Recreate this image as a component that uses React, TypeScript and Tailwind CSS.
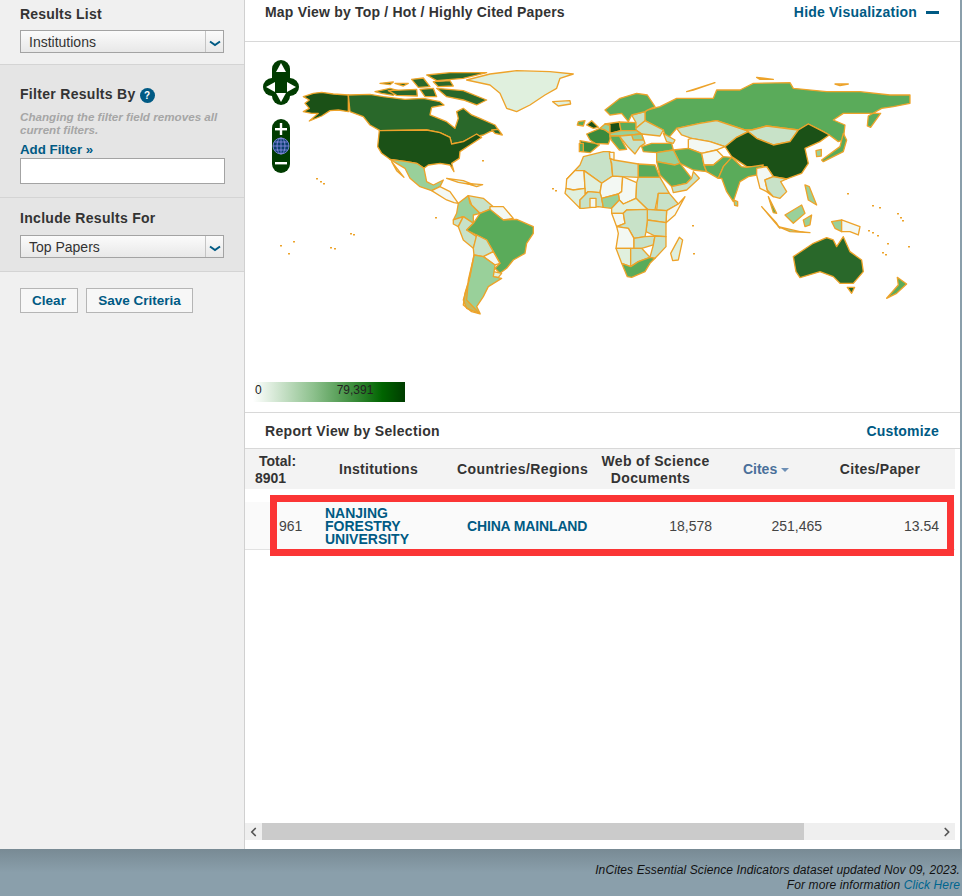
import { ChevronLeft, ChevronRight } from 'lucide-react';

const dark = '#1b5117';
const deep = '#29682a';
const strong = '#3c8a3c';
const mid = '#5aab5a';
const soft = '#99d09a';
const pale = '#c8e2c8';
const faint = '#e0f0de';
const blank = '#f3f8f3';

// shapes below are read off 3x crops, so each group is scaled back down
const americas: [string, string][] = [
  [dark, 'M295,135 L250,132 L215,127 L190,130 L160,140 L178,150 L165,160 L178,175 L160,185 L185,190 L205,190 L178,213 L215,198 L240,182 L265,180 L295,185 Z'],
  [deep, 'M295,135 L360,133 L400,140 L465,148 L520,145 L570,155 L582,165 L545,172 L540,195 L590,215 L615,235 L625,205 L620,185 L640,175 L665,195 L690,205 L735,225 L745,240 L720,245 L700,255 L665,262 L640,275 L605,282 L600,262 L570,248 L530,240 L390,242 L360,225 L340,200 L300,185 Z'],
  [deep, 'M725,240 L745,238 L757,255 L735,250 Z'],
  [dark, 'M388,242 L530,240 L570,248 L600,262 L605,282 L640,275 L680,252 L695,262 L660,285 L630,305 L628,325 L605,340 L612,365 L600,345 L570,340 L535,345 L522,355 L500,340 L470,335 L420,328 L395,310 L383,290 Z'],
  [deep, 'M375,125 L420,115 L445,122 L430,136 L395,130 Z'],
  [deep, 'M415,122 L500,118 L502,138 L440,136 Z'],
  [deep, 'M390,100 L430,96 L420,104 Z'],
  [deep, 'M435,100 L475,100 L460,108 Z'],
  [deep, 'M485,88 L520,84 L540,110 L505,112 Z'],
  [deep, 'M510,118 L550,115 L560,140 L525,140 Z'],
  [deep, 'M560,115 L640,122 L710,150 L680,165 L640,150 L590,140 Z'],
  [deep, 'M530,75 L600,68 L710,68 L640,85 L560,92 Z'],
  [deep, 'M550,95 L600,92 L610,108 L565,110 Z'],
  [faint, 'M650,90 L720,72 L800,62 L900,65 L970,72 L930,85 L920,115 L885,135 L840,165 L800,185 L770,175 L750,130 L720,105 Z'],
  [faint, 'M908,155 L960,152 L962,162 L925,168 Z'],
  [soft, 'M420,328 L470,335 L500,340 L522,355 L530,395 L550,405 L580,390 L570,410 L545,422 L510,410 L480,385 L465,355 Z'],
  [pale, 'M425,335 L462,382 L440,362 Z'],
  [blank, 'M545,422 L570,410 L600,425 L625,460 L612,458 L590,450 Z'],
  [faint, 'M590,385 L640,392 L672,405 L625,397 Z'],
  [faint, 'M650,400 L698,404 L680,410 Z'],
  [soft, 'M655,437 L625,460 L620,490 L610,510 L640,500 L670,520 L670,495 L690,490 L660,460 Z'],
  [pale, 'M655,437 L700,445 L730,470 L715,480 L690,490 L665,465 Z'],
  [blank, 'M720,470 L760,470 L790,505 L760,510 L720,480 Z'],
  [pale, 'M610,510 L640,500 L625,530 L610,522 Z'],
  [pale, 'M625,530 L640,500 L670,520 L650,540 L680,560 L670,595 L640,570 Z'],
  [mid, 'M690,490 L720,478 L760,510 L800,508 L850,530 L850,550 L830,580 L825,610 L790,630 L770,655 L750,670 L735,655 L750,640 L730,605 L710,570 L680,555 L650,540 L670,520 Z'],
  [pale, 'M680,555 L710,570 L730,605 L700,620 L672,615 L670,595 Z'],
  [blank, 'M700,620 L730,605 L750,640 L735,645 Z'],
  [faint, 'M730,665 L755,670 L745,682 L730,680 Z'],
  [soft, 'M672,615 L700,620 L735,645 L730,680 L755,685 L715,710 L700,740 L680,770 L690,790 L650,775 L640,750 L655,700 Z'],
];

const eastern: [string, string][] = [
  [mid, 'M262,180 L300,170 L350,145 L460,145 L470,120 L540,120 L580,100 L690,98 L700,115 L800,125 L900,125 L990,135 L1050,135 L1050,160 L1000,170 L965,175 L925,198 L922,228 L932,232 L962,190 L900,190 L850,190 L820,210 L855,225 L850,270 L835,275 L808,255 L790,245 L745,222 L715,240 L620,228 L575,240 L555,240 L470,212 L420,220 L350,235 L320,270 L310,240 L255,212 L255,185 Z'],
  [pale, 'M350,235 L420,220 L470,212 L555,240 L565,245 L530,262 L495,290 L450,275 L395,265 L365,255 Z'],
  [pale, 'M555,240 L575,240 L620,228 L715,240 L690,275 L640,285 L590,265 L565,245 Z'],
  [dark, 'M495,290 L530,262 L565,245 L590,265 L640,285 L690,275 L715,240 L745,222 L790,245 L808,255 L780,275 L735,295 L745,340 L725,370 L680,387 L640,380 L620,350 L560,350 L515,320 Z'],
  [blank, 'M385,268 L395,265 L450,275 L495,290 L470,300 L425,310 L385,295 Z'],
  [mid, 'M340,300 L385,295 L425,310 L432,345 L440,365 L400,360 L360,340 Z'],
  [blank, 'M425,310 L470,300 L490,320 L460,345 L432,345 Z'],
  [mid, 'M432,345 L460,345 L490,320 L515,322 L490,350 L475,385 L440,365 Z'],
  [mid, 'M490,350 L515,322 L545,350 L560,352 L610,345 L590,375 L565,380 L540,395 L520,455 L500,425 L485,385 L475,385 Z'],
  [soft, 'M522,450 L533,455 L533,468 L524,466 Z'],
  [blank, 'M590,355 L620,350 L640,380 L615,390 L622,420 L640,440 L620,425 L600,415 L590,375 Z'],
  [pale, 'M615,390 L640,380 L680,387 L662,395 L680,425 L660,445 L640,440 L622,420 Z'],
  [mid, 'M785,330 L840,290 L850,250 L860,270 L850,305 L790,335 Z'],
  [soft, 'M768,302 L784,298 L784,318 L770,320 Z'],
  [soft, 'M675,495 L725,465 L735,490 L700,520 Z'],
  [mid, 'M605,470 L650,520 L660,535 L630,500 Z'],
  [mid, 'M625,440 L650,490 L640,488 Z'],
  [soft, 'M655,530 L720,545 L750,548 L690,545 Z'],
  [soft, 'M730,510 L755,495 L750,525 L735,530 Z'],
  [soft, 'M815,515 L845,510 L845,545 L825,535 Z'],
  [blank, 'M845,510 L900,530 L895,555 L870,545 L845,545 Z'],
  [soft, 'M735,405 L748,410 L770,465 L745,450 Z'],
  [deep, 'M700,620 L760,580 L800,563 L820,570 L830,590 L850,560 L870,605 L905,630 L910,665 L880,700 L840,700 L820,680 L780,665 L720,683 L708,665 Z'],
  [deep, 'M862,712 L884,712 L875,730 Z'],
  [mid, 'M1012,682 L1040,702 L1010,730 L980,745 L1015,705 Z'],
  // Africa
  [pale, 'M20,388 L60,345 L70,320 L130,305 L150,305 L158,378 L125,400 L72,362 L45,362 Z'],
  [blank, 'M20,388 L45,362 L72,362 L75,415 L40,420 L18,415 Z'],
  [faint, 'M72,362 L125,400 L120,428 L85,425 L75,432 L75,415 Z'],
  [blank, 'M125,400 L158,378 L188,380 L185,425 L175,432 L125,445 L120,428 Z'],
  [pale, 'M150,325 L162,330 L235,342 L235,382 L188,380 L158,378 L155,340 Z'],
  [blank, 'M148,307 L162,307 L162,330 L150,325 Z'],
  [mid, 'M235,342 L285,345 L300,382 L235,382 Z'],
  [blank, 'M188,380 L230,398 L228,445 L190,462 L178,450 L175,432 L185,425 Z'],
  [pale, 'M235,382 L300,382 L328,430 L295,430 L285,480 L262,478 L228,445 L230,398 Z'],
  [pale, 'M295,430 L328,430 L355,462 L320,482 L290,480 Z'],
  [blank, 'M355,462 L375,440 L345,495 L318,518 L320,482 Z'],
  [pale, 'M262,478 L290,480 L320,482 L318,518 L262,510 Z'],
  [pale, 'M262,510 L318,518 L318,560 L285,558 L258,545 Z'],
  [faint, 'M18,415 L40,420 L75,415 L75,432 L85,425 L60,450 L60,475 L40,455 L15,430 Z'],
  [pale, 'M60,450 L85,425 L120,428 L125,445 L130,472 L115,470 L70,475 L60,475 Z'],
  [blank, 'M90,445 L108,445 L108,472 L90,472 Z'],
  [soft, 'M125,445 L175,432 L178,450 L155,475 L130,472 Z'],
  [faint, 'M155,475 L178,450 L190,462 L228,445 L262,478 L200,480 L190,490 L155,490 Z'],
  [blank, 'M155,490 L190,490 L195,520 L170,530 Z'],
  [pale, 'M190,490 L200,480 L262,478 L262,510 L258,545 L255,560 L222,565 L205,535 L170,530 L195,520 Z'],
  [blank, 'M170,530 L205,535 L222,565 L222,595 L168,595 L175,550 Z'],
  [pale, 'M222,565 L255,560 L285,558 L280,585 L245,595 L222,595 Z'],
  [pale, 'M285,558 L318,560 L318,590 L285,625 L270,622 L280,585 Z'],
  [faint, 'M168,595 L212,595 L212,650 L185,640 Z'],
  [pale, 'M212,595 L245,595 L270,622 L235,635 L212,650 Z'],
  [mid, 'M185,640 L212,650 L235,635 L270,622 L285,625 L270,640 L255,665 L215,682 L202,680 Z'],
  [faint, 'M358,562 L368,570 L355,630 L338,632 L332,610 Z'],
  // Europe and the Middle East
  [mid, 'M55,215 L75,212 L70,228 L52,225 Z'],
  [dark, 'M80,225 L95,212 L115,232 L100,235 Z'],
  [strong, 'M80,252 L120,235 L135,240 L150,250 L150,268 L145,282 L105,280 L90,270 Z'],
  [strong, 'M60,272 L105,280 L118,285 L90,308 L65,305 Z'],
  [mid, 'M58,280 L70,280 L70,305 L58,305 Z'],
  [soft, 'M120,235 L135,222 L150,225 L150,250 L135,240 Z'],
  [dark, 'M135,222 L178,216 L183,242 L150,250 L150,225 Z'],
  [mid, 'M178,216 L228,218 L230,242 L183,242 Z'],
  [pale, 'M228,218 L215,195 L255,185 L255,212 L228,235 Z'],
  [pale, 'M230,242 L228,235 L255,212 L310,240 L300,258 L245,252 Z'],
  [soft, 'M150,250 L183,242 L230,242 L245,252 L215,255 L178,258 L150,258 Z'],
  [pale, 'M178,258 L215,255 L245,252 L255,280 L240,290 L225,312 L205,292 Z'],
  [soft, 'M215,255 L245,252 L250,270 L220,270 Z'],
  [mid, 'M150,258 L178,258 L200,298 L178,300 L155,272 Z'],
  [mid, 'M135,180 L180,145 L230,130 L262,135 L285,170 L262,180 L255,185 L215,195 L205,215 L185,190 L150,195 Z'],
  [pale, 'M310,250 L345,270 L340,280 L320,275 Z'],
  [mid, 'M245,290 L275,280 L335,280 L340,300 L290,308 L250,305 Z'],
  [soft, 'M290,308 L340,300 L360,340 L345,345 L290,335 Z'],
  [mid, 'M290,335 L345,345 L360,340 L395,385 L380,400 L335,410 L300,375 Z'],
  [pale, 'M335,410 L380,400 L395,385 L400,365 L418,385 L380,420 L340,428 Z'],
];

// tiny islands, just orange specks
const specks: [number, number][] = [
  [316, 178], [320, 181], [323, 183], [350, 233], [353, 234], [293, 241], [280, 245], [288, 253], [330, 247], [334, 248], [435, 217], [552, 188], [555, 190], [482, 160],
  [692, 225], [897, 213], [900, 217], [902, 220], [868, 230], [872, 232], [877, 235], [882, 252], [885, 254], [908, 246], [887, 243], [847, 193], [872, 205], [879, 207], [693, 253],
];

function WorldMap() {
  return (
    <svg viewBox="245 42 715 370" width="715" height="370" className="block">
      <g transform="translate(250,50) scale(0.3333)" stroke="#eda32a" strokeWidth="4" strokeLinejoin="round">
        {americas.map(([fill, d], i) => (
          <path key={i} d={d} fill={fill} />
        ))}
        <path d="M672,618 L660,680 L645,730 L640,765 L665,785 L690,792 L650,750 L655,690 Z" fill="#eda32a" fillOpacity="0.5" />
      </g>
      <g transform="translate(560,50) scale(0.3333)" stroke="#eda32a" strokeWidth="4" strokeLinejoin="round">
        {eastern.map(([fill, d], i) => (
          <path key={i} d={d} fill={fill} />
        ))}
        <path d="M380,125 L465,98 L400,120 Z" fill="#ffffff" />
        <path d="M590,82 L640,88 L600,88 Z" fill="#ffffff" />
        <path d="M825,102 L865,102 L840,107 Z" fill="#ffffff" />
      </g>
      {specks.map(([x, y], i) => (
        <rect key={i} x={x} y={y} width="2" height="1.5" fill="#eda32a" />
      ))}

      {/* pan and zoom controls */}
      <g fill="#003c00">
        <rect x="272" y="60" width="18" height="45" rx="9" />
        <rect x="263" y="78" width="36" height="18" rx="9" />
        <rect x="272" y="119" width="18" height="54" rx="9" />
      </g>
      <g fill="#ffffff">
        <path d="M281,63 L286,72 L276,72 Z" />
        <path d="M281,102 L286,93 L276,93 Z" />
        <path d="M266,87 L275,82 L275,92 Z" />
        <path d="M296,87 L287,82 L287,92 Z" />
        <rect x="275" y="128" width="12" height="2.4" />
        <rect x="279.8" y="123" width="2.4" height="12" />
        <rect x="275" y="162" width="12" height="2.4" />
      </g>
      <g fill="#0b3f6e" stroke="#8f8fe8" strokeWidth="0.8">
        <circle cx="281" cy="146" r="8" />
        <ellipse cx="281" cy="146" rx="4" ry="8" fill="none" />
        <path d="M281,138 V154 M273,146 H289 M274.5,142 H287.5 M274.5,150 H287.5" fill="none" />
      </g>
    </svg>
  );
}

function SelectBox({ label }: { label: string }) {
  return (
    <div className="flex h-[23px] w-[204px] border border-[#a3a3a3] bg-gradient-to-b from-[#fbfbfb] to-[#e8e8e8]">
      <div className="flex-1 pl-2 text-[14px] leading-[23px] text-[#333]">{label}</div>
      <div className="flex w-[18px] items-center justify-center border-l border-[#c4c4c4]">
        <svg width="12" height="7" viewBox="0 0 12 7" className="mt-[4px]">
          <path d="M1,1.5 L6,5 L11,1.5" fill="none" stroke="#005a84" strokeWidth="2" />
        </svg>
      </div>
    </div>
  );
}

export default function App() {
  return (
    <div className="relative flex h-[896px] w-[962px] flex-col overflow-hidden bg-[#8a9fab] font-['Liberation_Sans',Arial,sans-serif]">
      <div className="flex h-[849px] shrink-0">
        {/* left filter rail */}
        <aside className="w-[245px] shrink-0 border-r border-[#d0d0d0] bg-[#f0f0f0]">
          <div className="h-[65px] border-b border-[#d4d4d4] px-5 pt-[6px]">
            <h3 className="text-[14px] leading-[16px] font-bold tracking-[0.2px] text-[#333]">Results List</h3>
            <div className="mt-[8px]">
              <SelectBox label="Institutions" />
            </div>
          </div>
          <div className="h-[133px] border-b border-[#d4d4d4] bg-[#e5e5e5] px-5 pt-[21px]">
            <div className="flex items-start gap-[4px]">
              <h3 className="text-[14px] leading-[16px] font-bold tracking-[0.3px] text-[#333]">Filter Results By</h3>
              <span className="mt-[2px] flex h-[15px] w-[15px] items-center justify-center rounded-full bg-[#005a84] text-[10px] font-bold text-white">?</span>
            </div>
            <p className="mt-[7px] text-[11.65px] leading-[13px] font-bold text-[#a6a6a6] italic">Changing the filter field removes all current filters.</p>
            <div className="mt-[6px] text-[13.3px] leading-[16px] font-bold text-[#005a84]">Add Filter »</div>
            <input className="block h-[26px] w-[205px] border border-[#a3a3a3] bg-white" />
          </div>
          <div className="h-[74px] border-b border-[#d4d4d4] bg-[#e5e5e5] px-5 pt-[12px]">
            <h3 className="text-[14px] leading-[16px] font-bold tracking-[0.3px] text-[#333]">Include Results For</h3>
            <div className="mt-[9px]">
              <SelectBox label="Top Papers" />
            </div>
          </div>
          <div className="flex gap-2 px-5 pt-[16px]">
            <button className="h-[25px] w-[58px] border border-[#b5b5b5] bg-[#f7f7f7] pt-[1px] text-[13.5px] font-bold text-[#005a84]">Clear</button>
            <button className="h-[25px] w-[107px] border border-[#b5b5b5] bg-[#f7f7f7] pt-[1px] text-[13.5px] font-bold text-[#005a84]">Save Criteria</button>
          </div>
        </aside>

        {/* main panel */}
        <main className="flex w-[715px] shrink-0 flex-col bg-white">
          <div className="flex h-[42px] items-start justify-between border-b border-[#d8d8d8] pt-[4px] pr-[21px] pl-[20px]">
            <h2 className="text-[14px] leading-[16px] font-bold tracking-[0.2px] text-[#333]">Map View by Top / Hot / Highly Cited Papers</h2>
            <div className="flex items-center gap-[9px] text-[14px] leading-[16px] font-bold tracking-[0.2px] text-[#005a84]">
              Hide Visualization
              <span className="h-[3px] w-[13px] bg-[#005a84]" />
            </div>
          </div>

          <div className="relative h-[370px]">
            <WorldMap />
            <div className="absolute top-[340px] left-[8px] flex h-[20px] w-[152px] bg-[linear-gradient(to_right,#ffffff_0%,#8cc08c_40%,#3f8f3f_65%,#006400_85%,#003c00_100%)] text-[12px] leading-[16px] text-[#222]">
              <span className="ml-[2px]">0</span>
              <span className="ml-[75px]">79,391</span>
            </div>
          </div>

          <div className="flex h-[37px] items-center justify-between border-t border-b border-[#d8d8d8] pt-[1px] pr-[21px] pl-[20px]">
            <h2 className="text-[14px] font-bold tracking-[0.33px] text-[#333]">Report View by Selection</h2>
            <a className="text-[14px] font-bold tracking-[0.2px] text-[#005a84]">Customize</a>
          </div>

          <div className="flex h-[40px] w-[710px] items-center bg-[#f3f3f3] pt-[1px] text-[14px] leading-[17px] font-bold text-[#333]">
            <div className="w-[55px] pl-[10px]">
              <div className="pl-[4px]">Total:</div>
              <div>8901</div>
            </div>
            <div className="w-[157px] text-center tracking-[0.3px]">Institutions</div>
            <div className="w-[125px] tracking-[0.4px] whitespace-nowrap">Countries/Regions</div>
            <div className="w-[141px] pr-[7px] pl-[13px] text-center tracking-[0.35px]">
              <div>Web of Science</div>
              <div className="pr-[10px]">Documents</div>
            </div>
            <div className="w-[86px] text-center text-[#4a6f9a]">
              Cites <span className="inline-block h-0 w-0 border-x-[4px] border-t-[4px] border-x-transparent border-t-[#6d8fb5] align-middle" />
            </div>
            <div className="w-[142px] text-center tracking-[0.3px]">Cites/Paper</div>
          </div>

          <div className="mt-[13px] flex h-[48px] w-[710px] items-center border-b border-[#e2e2e2] bg-[#fafafa] pt-[2px] pr-[16px] text-[14px] text-[#444]">
            <div className="w-[80px] pl-[34px]">961</div>
            <div className="w-[142px] pr-[20px] text-[14px] leading-[13px] font-bold text-[#005a84]">NANJING FORESTRY UNIVERSITY</div>
            <div className="w-[120px] text-[14px] font-bold tracking-[-0.15px] whitespace-nowrap text-[#005a84]">CHINA MAINLAND</div>
            <div className="w-[125px] text-right">18,578</div>
            <div className="w-[110px] text-right">251,465</div>
            <div className="flex-1 text-right">13.54</div>
          </div>

          <div className="flex-1" />

          <div className="mb-[9px] flex h-[17px] w-[710px] items-center bg-[#efefef]">
            <ChevronLeft size={14} strokeWidth={3} className="w-[17px] shrink-0 text-[#555]" />
            <div className="h-full w-[542px] bg-[#cbcbcb]" />
            <div className="flex-1" />
            <ChevronRight size={14} strokeWidth={3} className="mr-[1px] text-[#555]" />
          </div>
        </main>
      </div>

      {/* highlight drawn over the first row */}
      <div className="pointer-events-none absolute top-[495px] left-[270px] h-[61px] w-[684px] border-[7px] border-[#fb3535]" />

      <footer className="flex-1 bg-[linear-gradient(to_bottom,#788a94_0%,#8a9fab_50%)] pt-[14px] pr-[2px] text-right text-[12px] leading-[15px] tracking-[0.1px] text-[#111] italic">
        <div>InCites Essential Science Indicators dataset updated Nov 09, 2023.</div>
        <div>
          For more information <a className="text-[#00658f]">Click Here</a>
        </div>
      </footer>
    </div>
  );
}
